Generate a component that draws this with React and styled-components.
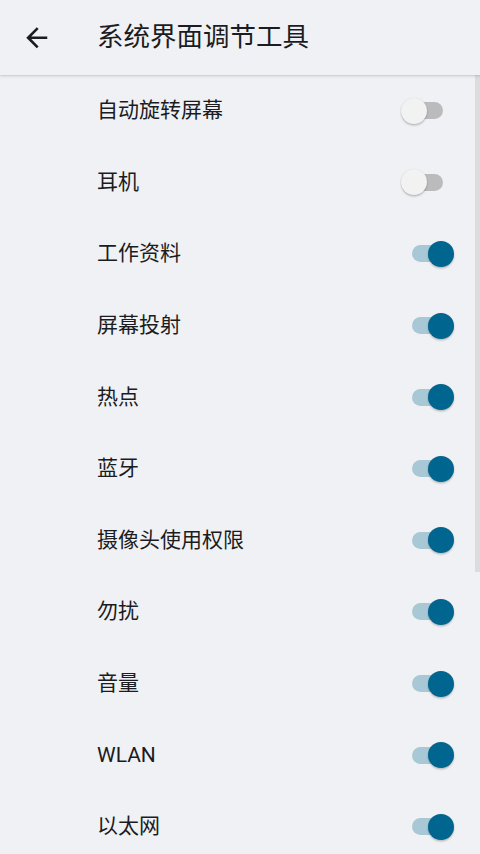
import React from "react";
import styled, { createGlobalStyle } from "styled-components";

const Global = createGlobalStyle`
  html, body { margin: 0; padding: 0; height: 100%; background: #f0f1f4; }
  #root { height: 100%; }
  * { box-sizing: border-box; }
`;

const FONT = `Roboto, "Noto Sans CJK SC", "Noto Sans", sans-serif`;

const Page = styled.div`
  height: 854px;
  display: flex;
  flex-direction: column;
  background: #f0f1f4;
  font-family: ${FONT};
  color: #1b1c1f;
  overflow: hidden;
`;

const Toolbar = styled.header`
  height: 75px;
  flex: none;
  display: flex;
  align-items: center;
  background: #f0f1f4;
  box-shadow: 0 1px 4px rgba(0, 0, 0, 0.12), 0 1px 1px rgba(0, 0, 0, 0.06);
  position: relative;
  z-index: 1;
`;

const BackButton = styled.button`
  width: 32px;
  height: 32px;
  margin-left: 21px;
  padding: 0;
  border: none;
  background: transparent;
  display: flex;
  align-items: center;
  justify-content: center;
  color: #1b1c1f;
`;

const Title = styled.h1`
  margin: 0 0 0 44px;
  font-size: 26.5px;
  font-weight: 400;
  line-height: 1;
  letter-spacing: 0;
`;

const ListViewport = styled.div`
  flex: 1;
  position: relative;
  overflow: hidden;
`;

const ScrollIndicator = styled.div`
  position: absolute;
  top: 0;
  right: 0;
  width: 5px;
  height: 497px;
  background: #dcdcde;
`;

const List = styled.div`
  display: flex;
  flex-direction: column;
`;

const Row = styled.div`
  height: 71.6px;
  flex: none;
  display: flex;
  align-items: center;
  padding-left: 97px;
  padding-right: 26.5px;
`;

const Label = styled.span`
  flex: 1;
  font-size: 21px;
  line-height: 1;
`;

const SwitchRoot = styled.div`
  position: relative;
  width: 53px;
  height: 28px;
  flex: none;
`;

const Track = styled.div`
  position: absolute;
  left: 11px;
  top: 5.5px;
  width: 31px;
  height: 17px;
  border-radius: 8.5px;
  background: ${(p) => (p.$on ? "#a9c8d5" : "#bbbbbd")};
`;

const Thumb = styled.div`
  position: absolute;
  top: 1px;
  left: ${(p) => (p.$on ? "27px" : "0px")};
  width: 26px;
  height: 26px;
  border-radius: 50%;
  background: ${(p) => (p.$on ? "#00658f" : "#f2f2f2")};
  box-shadow: 0 1.5px 2px rgba(0, 0, 0, 0.22), 0 0 1px rgba(0, 0, 0, 0.12);
`;

function Switch({ on }) {
  return (
    <SwitchRoot>
      <Track $on={on} />
      <Thumb $on={on} />
    </SwitchRoot>
  );
}

const items = [
  ["自动旋转屏幕", false],
  ["耳机", false],
  ["工作资料", true],
  ["屏幕投射", true],
  ["热点", true],
  ["蓝牙", true],
  ["摄像头使用权限", true],
  ["勿扰", true],
  ["音量", true],
  ["WLAN", true],
  ["以太网", true],
];

export default function App() {
  return (
    <>
      <Global />
      <Page>
        <Toolbar>
          <BackButton aria-label="返回">
            <svg width="31.5" height="31.5" viewBox="0 0 24 24" fill="currentColor">
              <path d="M20 11H7.83l5.59-5.59L12 4l-8 8 8 8 1.41-1.41L7.83 13H20v-2z" />
            </svg>
          </BackButton>
          <Title>系统界面调节工具</Title>
        </Toolbar>
        <ListViewport>
          <List>
            {items.map(([label, on]) => (
              <Row key={label}>
                <Label>{label}</Label>
                <Switch on={on} />
              </Row>
            ))}
          </List>
          <ScrollIndicator />
        </ListViewport>
      </Page>
    </>
  );
}
